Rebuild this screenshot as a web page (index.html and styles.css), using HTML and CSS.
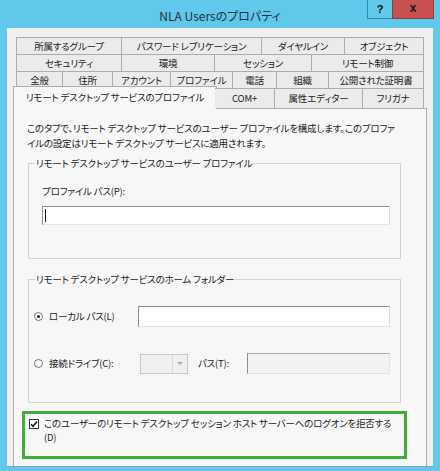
FILE: index.html
```html
<!DOCTYPE html>
<html lang="ja">
<head>
<meta charset="utf-8">
<title>NLA Usersのプロパティ</title>
<link rel="stylesheet" href="styles.css">
</head>
<body>
<div class="window">
  <div class="titlebar">
    <div></div>
    <div class="title">NLA Usersのプロパティ</div>
    <div class="caption">
      <div class="btn-help">?</div>
      <div class="btn-close">x</div>
    </div>
  </div>
  <div class="client">
    <div class="tabs">
      <div class="tabrow row1">
        <div class="tab">所属するグループ</div>
        <div class="tab">パスワード レプリケーション</div>
        <div class="tab">ダイヤルイン</div>
        <div class="tab">オブジェクト</div>
      </div>
      <div class="tabrow row2">
        <div class="tab">セキュリティ</div>
        <div class="tab">環境</div>
        <div class="tab">セッション</div>
        <div class="tab">リモート制御</div>
      </div>
      <div class="tabrow row3">
        <div class="tab">全般</div>
        <div class="tab">住所</div>
        <div class="tab">アカウント</div>
        <div class="tab">プロファイル</div>
        <div class="tab">電話</div>
        <div class="tab">組織</div>
        <div class="tab">公開された証明書</div>
      </div>
      <div class="tabrow row4">
        <div class="tab active">リモート デスクトップ サービスのプロファイル</div>
        <div class="tab">COM+</div>
        <div class="tab">属性エディター</div>
        <div class="tab">フリガナ</div>
      </div>
    </div>
    <div class="panel">
      <p class="desc">このタブで、リモート デスクトップ サービスのユーザー プロファイルを構成します。このプロファ<br>イルの設定はリモート デスクトップ サービスに適用されます。</p>
      <fieldset class="group g1">
        <legend>リモート デスクトップ サービスのユーザー プロファイル</legend>
        <div class="field-label">プロファイル パス(P):</div>
        <div class="input"><span class="caret"></span></div>
      </fieldset>
      <fieldset class="group g2">
        <legend>リモート デスクトップ サービスのホーム フォルダー</legend>
        <div class="opt-row">
          <span class="radio checked"></span>
          <span class="opt-label local">ローカル パス(L)</span>
          <div class="input grow"></div>
        </div>
        <div class="opt-row second">
          <span class="radio"></span>
          <span class="opt-label drive">接続ドライブ(C):</span>
          <div class="combo"><span class="combo-btn"><span class="arrow"></span></span></div>
          <span class="opt-label path">パス(T):</span>
          <div class="input grow disabled"></div>
        </div>
      </fieldset>
      <div class="deny">
        <span class="checkbox">
          <svg width="8" height="8" viewBox="0 0 8 8"><path d="M1 4.2 L3 6.2 L7 1.5" fill="none" stroke="#111" stroke-width="1.6"/></svg>
        </span>
        <span class="deny-text">このユーザーのリモート デスクトップ セッション ホスト サーバーへのログオンを拒否する<br>(D)</span>
      </div>
    </div>
  </div>
</div>
</body>
</html>
```
FILE: styles.css
```css
* { box-sizing: border-box; }
html, body { margin: 0; padding: 0; }
body {
  width: 440px;
  height: 471px;
  overflow: hidden;
  background: #5fc8eb;
  font-family: "Noto Sans CJK JP", "Noto Sans", sans-serif;
  font-size: 9.5px;
  letter-spacing: -0.2px;
  font-feature-settings: "palt";
  color: #1a1a1a;
}
.window {
  width: 440px;
  height: 471px;
  display: flex;
  flex-direction: column;
}
.titlebar {
  height: 28px;
  display: grid;
  grid-template-columns: 1fr auto 1fr;
}
.title {
  align-self: center;
  font-size: 12px;
  letter-spacing: 0;
  color: #23343f;
  padding-top: 2px;
  white-space: nowrap;
}
.caption {
  justify-self: end;
  display: flex;
  align-items: flex-start;
  margin-right: 6px;
}
.btn-help {
  width: 25px;
  height: 19px;
  border: 1px solid #3685b3;
  border-top: none;
  border-right: none;
  background: #5fc8eb;
  display: flex;
  align-items: center;
  justify-content: center;
  font: bold 11px "Liberation Sans", sans-serif;
  color: #111;
}
.btn-close {
  width: 42px;
  height: 19px;
  border: 1px solid #8d3f3f;
  border-top: none;
  background: #c75050;
  display: flex;
  align-items: center;
  justify-content: center;
  font: bold 12px "Liberation Sans", sans-serif;
  color: #1a1a1a;
  padding-bottom: 2px;
}
.client {
  margin: 0 7px;
  height: 439px;
  background: #f0f0f0;
  padding: 9px 6px 0;
  overflow: hidden;
  border-bottom: 1px solid #86a4b6;
}
.tabs { margin: 0 3px; }
.tabrow {
  display: grid;
  height: 17px;
}
.row1 { grid-template-columns: 106px 140px 83px 79px; }
.row2 { grid-template-columns: 106px 93px 97px 112px; }
.row3 { grid-template-columns: 47px 50px 58px 62px 44px 52px 95px; }
.row4 {
  grid-template-columns: 199px 60px 88px 61px;
  height: 20px;
  position: relative;
  z-index: 1;
}
.tab {
  border: 1px solid #acacac;
  border-bottom: none;
  border-left: none;
  background: #ebebeb;
  display: flex;
  align-items: center;
  justify-content: center;
  white-space: nowrap;
  line-height: 1;
  padding-top: 1px;
}
.tab:first-child { border-left: 1px solid #acacac; }
.tab.active {
  margin: -2px -2px -1px -3px;
  background: #f7f7f7;
  border-left: 1px solid #acacac;
  padding-top: 0;
  padding-bottom: 1px;
}
.panel {
  border: 1px solid #acacac;
  background: #f7f7f7;
  height: 372px;
  padding: 12px 25px 0 13px;
}
.desc {
  margin: 0;
  line-height: 15px;
  white-space: nowrap;
}
.group {
  margin: 0 0 0 1px;
  border: 1px solid #d3d3d3;
  min-width: 0;
}
.group legend {
  line-height: 15px;
  padding: 0 1px;
  white-space: nowrap;
}
.g1 {
  margin-top: 5px;
  padding: 13px 10px 33px 13px;
}
.g1 legend { margin-left: -7px; }
.g2 {
  margin-top: 13px;
  padding: 19px 10px 28px 5px;
}
.g2 legend { margin-left: 1px; }
.field-label {
  line-height: 15px;
}
.input {
  margin-top: 7px;
  height: 19px;
  background: #fff;
  border: 1px solid;
  border-color: #8e8e8e #dcdcdc #e6e6e6 #8e8e8e;
  display: flex;
  align-items: center;
  padding-left: 2px;
}
.caret {
  width: 1px;
  height: 13px;
  background: #111;
}
.opt-row {
  display: flex;
  align-items: center;
  height: 21px;
}
.opt-row.second { margin-top: 26px; }
.opt-row .input {
  margin-top: 0;
  height: 21px;
}
.grow { flex: 1; }
.radio {
  width: 9px;
  height: 9px;
  border-radius: 50%;
  border: 1px solid #6e6e6e;
  background: #fff;
  margin-right: 6px;
  display: flex;
  align-items: center;
  justify-content: center;
  flex: none;
}
.radio.checked::after {
  content: "";
  width: 3px;
  height: 3px;
  border-radius: 50%;
  background: #111;
}
.opt-label { white-space: nowrap; line-height: 15px; }
.local { width: 89px; }
.drive { width: 91px; }
.path { width: 49px; margin-left: 10px; }
.combo {
  width: 48px;
  height: 20px;
  border: 1px solid #c9c9c9;
  background: #f0f0f0;
  display: flex;
  justify-content: flex-end;
}
.combo-btn {
  width: 15px;
  border-left: 1px solid #dadada;
  display: flex;
  align-items: center;
  justify-content: center;
}
.arrow {
  width: 0;
  height: 0;
  border-left: 3px solid transparent;
  border-right: 3px solid transparent;
  border-top: 3px solid #a8a8a8;
}
.input.disabled {
  background: #f2f2f2;
  border-color: #a9a9a9 #e2e2e2 #e2e2e2 #8e8e8e;
}
.deny {
  margin: 8px -6px 0 -5px;
  height: 48px;
  border: 3px solid #3db03a;
  padding: 2px 0 0 4px;
  display: flex;
  align-items: flex-start;
}
.checkbox {
  width: 10px;
  height: 10px;
  margin-top: 3px;
  border: 1px solid #333;
  background: #fff;
  display: flex;
  align-items: center;
  justify-content: center;
  flex: none;
}
.deny-text {
  margin-left: 5px;
  line-height: 14px;
  white-space: nowrap;
}
```
